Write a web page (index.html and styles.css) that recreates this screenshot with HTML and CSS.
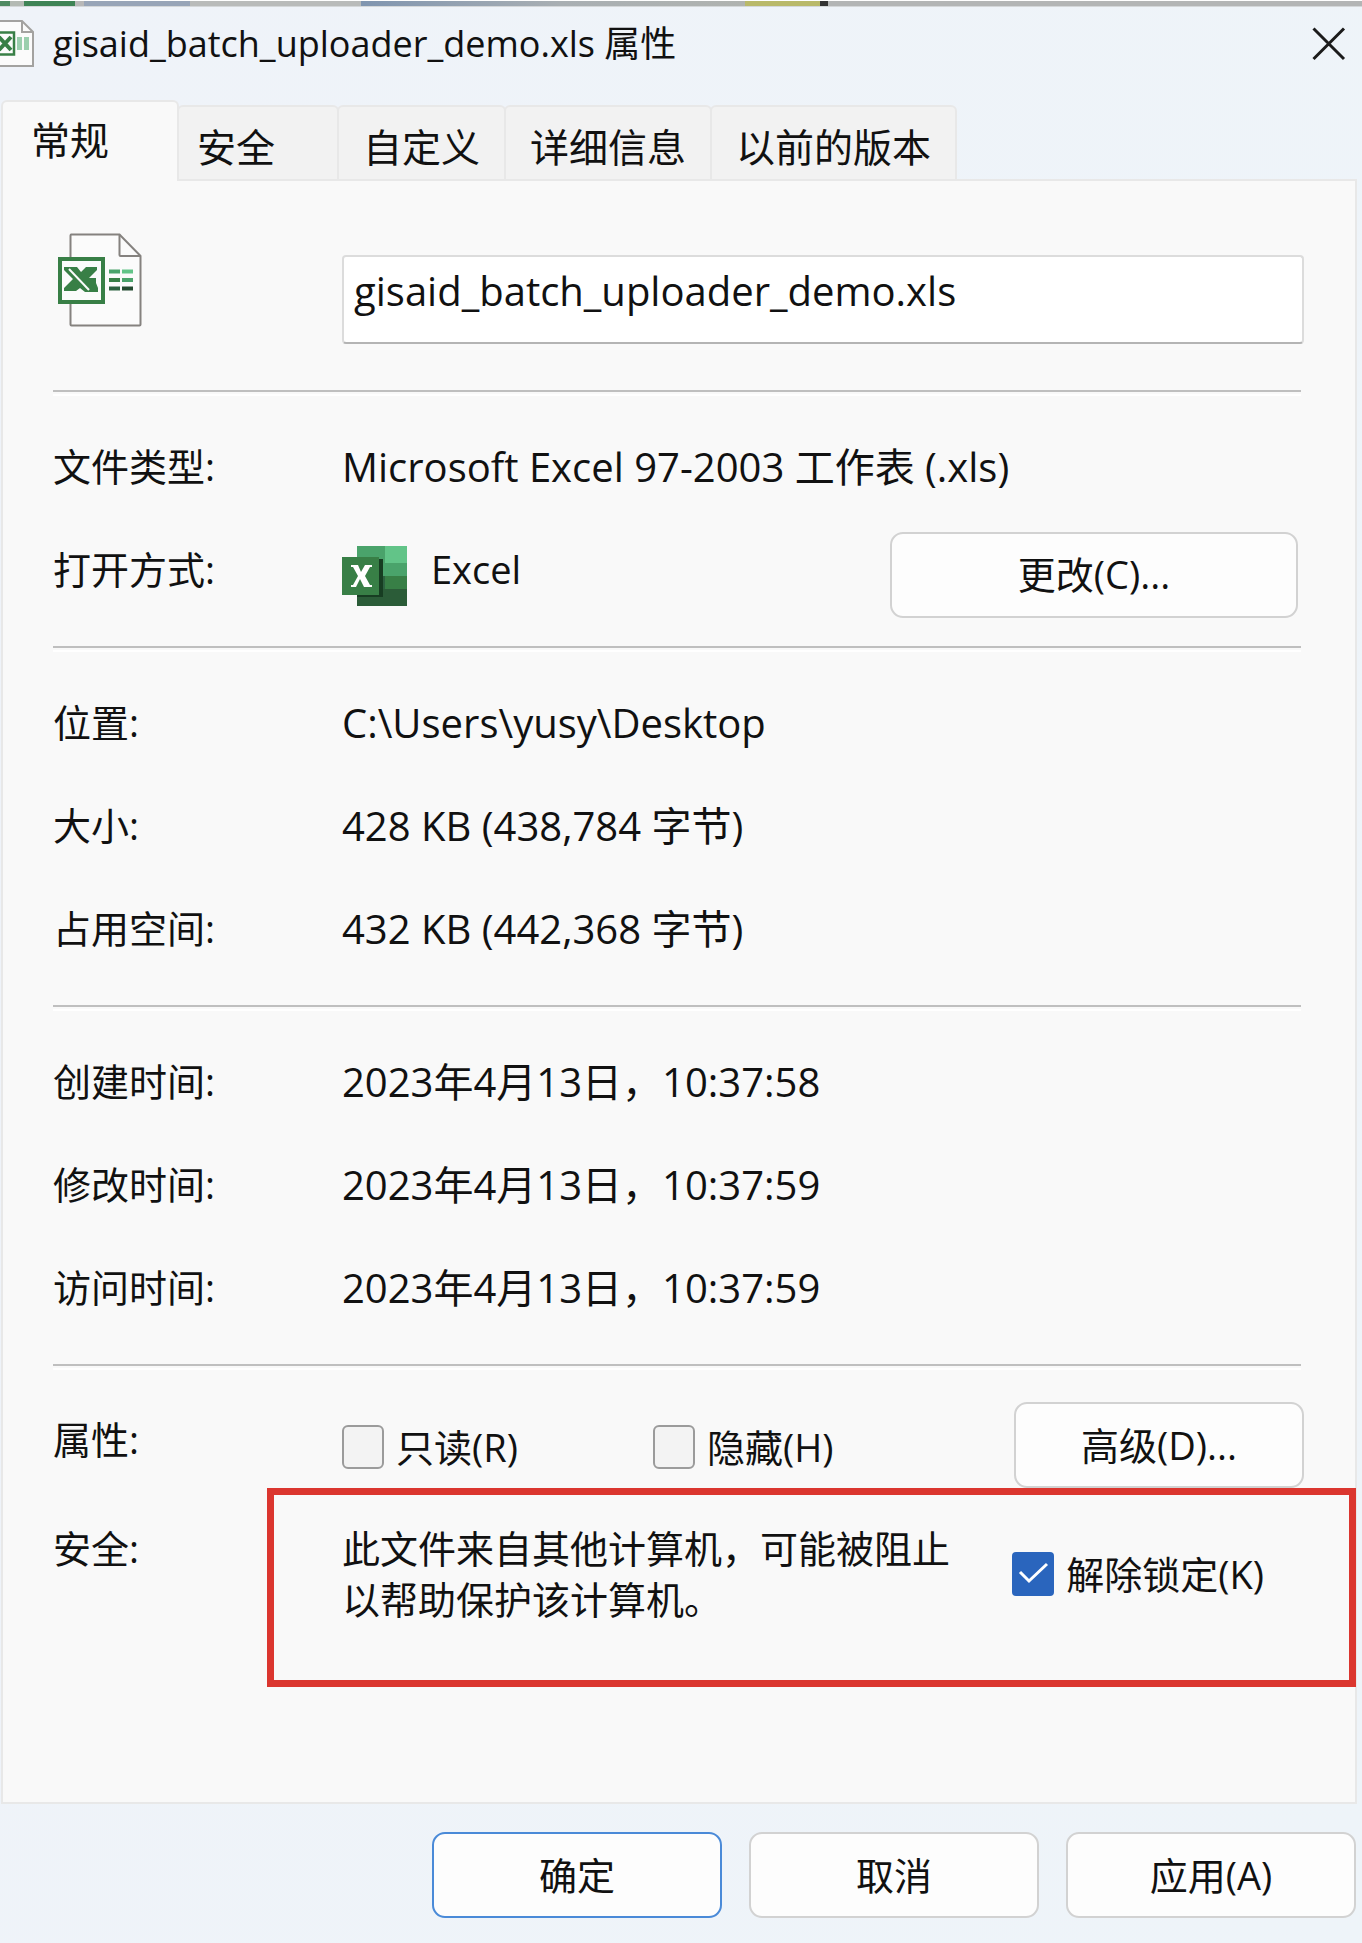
FILE: index.html
```html
<!DOCTYPE html>
<html lang="zh-CN">
<head>
<meta charset="utf-8">
<meta name="viewport" content="width=device-width, initial-scale=1">
<title>gisaid_batch_uploader_demo.xls 属性</title>
<link rel="stylesheet" href="styles.css">
</head>
<body>
<svg class="defs" aria-hidden="true">
  <symbol id="xls-file" viewBox="0 0 84 94">
    <path d="M12.500 1.500H61.500L82.500 23V91.500a1 1 0 0 1-1 1H13.500a1 1 0 0 1-1-1V2.500a1 1 0 0 1 1-1Z" fill="#fbfbfb" stroke="#85827f" stroke-width="2"/>
    <path d="M61.500 1.500V22a1 1 0 0 0 1 1H82.500" fill="none" stroke="#85827f" stroke-width="2"/>
    <path d="M0 24h47v47H0z" fill="#387f46"/>
    <path d="M4 28h39v39H4z" fill="#fbfbfb"/>
    <path d="M6 34H19L23 39L28 34H39V37L31 45H38V50L40 55V59H27L22 55L18 58H6V55L15 46L6 37Z" fill="#387f46"/>
    <path d="M11 36L31 57" stroke="#fbfbfb" stroke-width="2"/>
    <path d="M51 36.500h11v4H51z" fill="#4aa36b"/>
    <path d="M64 36.500h11v4H64z" fill="#62c488"/>
    <path d="M51 45h11v4H51z" fill="#387f46"/>
    <path d="M64 45h11v4H64z" fill="#4aa36b"/>
    <path d="M51 53.500h11v4H51z" fill="#2d6240"/>
    <path d="M64 53.500h11v4H64z" fill="#234a30"/>
  </symbol>
</svg>
<div class="backdrop" aria-hidden="true"></div>
<main class="dialog">
  <header class="titlebar">
    <svg class="title-icon" viewBox="0 0 34 47" aria-hidden="true">
      <path d="M-2 1H22L33 12V46H-2" fill="#fbfbfb" stroke="#a3a2a0" stroke-width="2"/>
      <path d="M22 1V12H33" fill="none" stroke="#a3a2a0" stroke-width="2"/>
      <path d="M-2 12.500H14V34.500H-2" fill="#fbfbfb" stroke="#387f46" stroke-width="2.500"/>
      <path d="M-1 17L11 30M11 17L-1 30" stroke="#387f46" stroke-width="4"/>
      <path d="M17 17h5v13h-5zM24 17h5v13h-5z" fill="#9bcfae"/>
    </svg>
    <h1 class="title">gisaid_batch_uploader_demo.xls 属性</h1>
    <button class="close" type="button" aria-label="关闭">
      <svg viewBox="0 0 34 34" aria-hidden="true"><path d="M1.500 1.500L32 32M32 1.500L1.500 32" stroke="#1b1b1b" stroke-width="3"/></svg>
    </button>
  </header>
  <div class="tabs" role="tablist">
    <button class="tab tab-active" type="button" role="tab" aria-selected="true">常规</button>
    <button class="tab tab-security" type="button" role="tab">安全</button>
    <button class="tab" type="button" role="tab">自定义</button>
    <button class="tab" type="button" role="tab">详细信息</button>
    <button class="tab" type="button" role="tab">以前的版本</button>
  </div>
  <section class="panel" role="tabpanel">
    <div class="row file-row">
      <svg class="file-icon" aria-hidden="true"><use href="#xls-file"/></svg>
      <input class="filename" type="text" aria-label="文件名" value="gisaid_batch_uploader_demo.xls">
    </div>
    <hr>
    <dl class="group">
      <div class="row"><dt>文件类型:</dt><dd>Microsoft Excel 97-2003 工作表 (.xls)</dd></div>
      <div class="row">
        <dt>打开方式:</dt>
        <dd class="opens">
          <svg class="excel-icon" viewBox="0 0 65 60" aria-hidden="true">
            <path d="M15 0h28v30H15z" fill="#4aa36b"/>
            <path d="M43 0h22v17H43z" fill="#62c488"/>
            <path d="M43 17h22v13H43z" fill="#4aa36b"/>
            <path d="M15 30h28v13H15z" fill="#2d6240"/>
            <path d="M43 30h22v13H43z" fill="#387f46"/>
            <path d="M15 43h50v17H15z" fill="#2b5c38"/>
            <path d="M15 13h26v38H15z" fill="#173d22"/>
            <path d="M0 11h37v38H0z" fill="#387f46"/>
            <path d="M9 19h7l3 7 4-7h7v2h-2l-5 9 5 9h2v2h-8l-4-8-4 8H9v-2h2l5-9-5-9H9z" fill="#fff"/>
          </svg>
          <span>Excel</span>
          <button class="btn btn-change" type="button">更改(C)...</button>
        </dd>
      </div>
    </dl>
    <hr>
    <dl class="group">
      <div class="row"><dt>位置:</dt><dd>C:\Users\yusy\Desktop</dd></div>
      <div class="row"><dt>大小:</dt><dd>428 KB (438,784 字节)</dd></div>
      <div class="row"><dt>占用空间:</dt><dd>432 KB (442,368 字节)</dd></div>
    </dl>
    <hr>
    <dl class="group">
      <div class="row"><dt>创建时间:</dt><dd>2023年4月13日，10:37:58</dd></div>
      <div class="row"><dt>修改时间:</dt><dd>2023年4月13日，10:37:59</dd></div>
      <div class="row"><dt>访问时间:</dt><dd>2023年4月13日，10:37:59</dd></div>
    </dl>
    <hr>
    <div class="row attributes">
      <span class="label">属性:</span>
      <div class="attribute-controls">
        <label class="check"><input type="checkbox"><span>只读(R)</span></label>
        <label class="check"><input type="checkbox"><span>隐藏(H)</span></label>
        <button class="btn btn-small" type="button">高级(D)...</button>
      </div>
    </div>
    <div class="row security">
      <span class="label">安全:</span>
      <div class="security-controls">
        <p class="notice">此文件来自其他计算机，可能被阻止<br>以帮助保护该计算机。</p>
        <label class="check unblock"><input type="checkbox" checked><span>解除锁定(K)</span></label>
      </div>
      <div class="highlight" aria-hidden="true"></div>
    </div>
  </section>
  <footer class="actions">
    <button class="btn btn-small btn-default" type="button">确定</button>
    <button class="btn btn-small" type="button">取消</button>
    <button class="btn btn-small" type="button">应用(A)</button>
  </footer>
</main>
</body>
</html>
```

FILE: styles.css
```css
* {
  box-sizing: border-box;
}

body {
  margin: 0;
  min-height: 100vh;
  display: flex;
  flex-direction: column;
  background: #eff3f9;
  color: #111;
  font: 38px/51px "Open Sans", "Noto Sans CJK SC", sans-serif;
}

button,
input {
  font: inherit;
  color: inherit;
}

.defs {
  display: none;
}

/* Sliver of the window behind the dialog */
.backdrop {
  height: 7px;
  border-top: 1px solid #fff;
  border-bottom: 1px solid #d4d7d9;
  background: linear-gradient(90deg,
    #4f8a62 0 10px, #b4bab4 10px 24px, #3f8456 24px 75px, #b8b8b8 75px 84px,
    #98a5b8 84px 190px, #b9bbba 190px 361px, #8095b0 361px, #a9afb3 560px, #b0b3b0 745px,
    #b9b96a 745px 820px, #333 820px 828px, #b3b5b5 828px);
}

.dialog {
  flex: 1;
  display: flex;
  flex-direction: column;
  background: linear-gradient(100deg, #eff3f9, #eef4f9);
}

.titlebar {
  display: flex;
  align-items: center;
  height: 93px;
  padding: 0 16px 20px 0;
}

.title-icon {
  width: 34px;
  height: 47px;
}

.title {
  flex: 1;
  margin: 0 0 0 19px;
  font-size: 36px;
  font-weight: 400;
}

.close {
  padding: 0;
  border: 0;
  background: none;
  line-height: 0;
}

.close svg {
  width: 34px;
  height: 34px;
}

.tabs {
  display: flex;
  align-items: flex-end;
  margin-left: 1px;
  font-size: 39px;
}

.tab {
  height: 74px;
  padding: 6px 24px 0;
  margin-left: -2px;
  border: 2px solid #e8e8e8;
  border-bottom: 0;
  border-radius: 6px 6px 0 0;
  background: #f2f2f2;
}

.tab-active {
  position: relative;
  z-index: 1;
  height: 81px;
  width: 178px;
  margin: 0 0 -2px;
  padding: 0 0 5px 28px;
  background: #f9f9f9;
  text-align: left;
}

.tab-security {
  width: 162px;
  padding-left: 18px;
  text-align: left;
}

.panel {
  flex: 1;
  margin: 0 5px 0 1px;
  padding: 0 51px 0 50px;
  border: 2px solid #e8e8e8;
  background: #f9f9f9;
}

.row {
  display: grid;
  grid-template-columns: 289px 1fr;
  align-items: center;
  min-height: 103px;
}

.file-row {
  min-height: 209px;
}

.file-icon {
  width: 84px;
  height: 94px;
  margin: 0 0 12px 5px;
}

.filename {
  width: 100%;
  height: 89px;
  margin-top: 28px;
  padding: 0 10px 18px;
  border: 2px solid #dcdcdc;
  border-bottom-color: #b4b4b4;
  border-radius: 4px;
  background: #fff;
  font-size: 40px;
}

hr {
  height: 2px;
  margin: 0 3px 0 0;
  border: 0;
  background: #bfbfbf;
  box-shadow: 0 4px 0 #fff;
}

.group {
  margin: 0;
  padding: 24px 0;
}

dt,
dd {
  padding-bottom: 2px;
}

dd {
  margin: 0;
  font-size: 40px;
}

.opens {
  display: flex;
  align-items: center;
}

.opens span {
  font-size: 38px;
}

.excel-icon {
  width: 65px;
  height: 60px;
  margin: 12px 24px 0 0;
}

.btn {
  height: 86px;
  padding: 0 16px;
  border: 2px solid #d2d2d2;
  border-radius: 13px;
  background: #fdfdfd;
  font-size: 38px;
}

.btn-change {
  width: 408px;
  margin: 10px 6px 0 auto;
}

.btn-small {
  width: 290px;
}

.btn-default {
  border-color: #4a8ad8;
}

.attributes {
  padding-top: 36px;
  min-height: 122px;
}

.attributes .label {
  padding-bottom: 12px;
}

.attribute-controls,
.security-controls {
  display: flex;
  align-items: center;
}

.check {
  display: flex;
  align-items: center;
  gap: 12px;
}

.attribute-controls .check {
  width: 311px;
  padding-top: 4px;
}

.check input {
  appearance: none;
  width: 42px;
  height: 44px;
  margin: 0;
  border: 2px solid #9b9b9b;
  border-radius: 6px;
  background: #f3f3f3;
}

.check input:checked {
  border: 0;
  border-radius: 4px;
  background: #2a65bd url("data:image/svg+xml,%3Csvg xmlns='http://www.w3.org/2000/svg' viewBox='0 0 42 44'%3E%3Cpath d='M8 20L17 29L35 12' fill='none' stroke='white' stroke-width='3'/%3E%3C/svg%3E") center / 100% 100%;
}

.attribute-controls .btn {
  margin-left: auto;
}

.security {
  position: relative;
  align-items: start;
  min-height: 199px;
  padding-top: 35px;
}

.notice {
  margin: 0;
  white-space: nowrap;
}

.unblock {
  margin: 0 40px 0 auto;
  white-space: nowrap;
}

.highlight {
  position: absolute;
  inset: 0 -52px 0 214px;
  border: 7px solid #db362f;
}

.actions {
  display: flex;
  justify-content: flex-end;
  gap: 27px;
  padding: 28px 6px 25px;
}
```
